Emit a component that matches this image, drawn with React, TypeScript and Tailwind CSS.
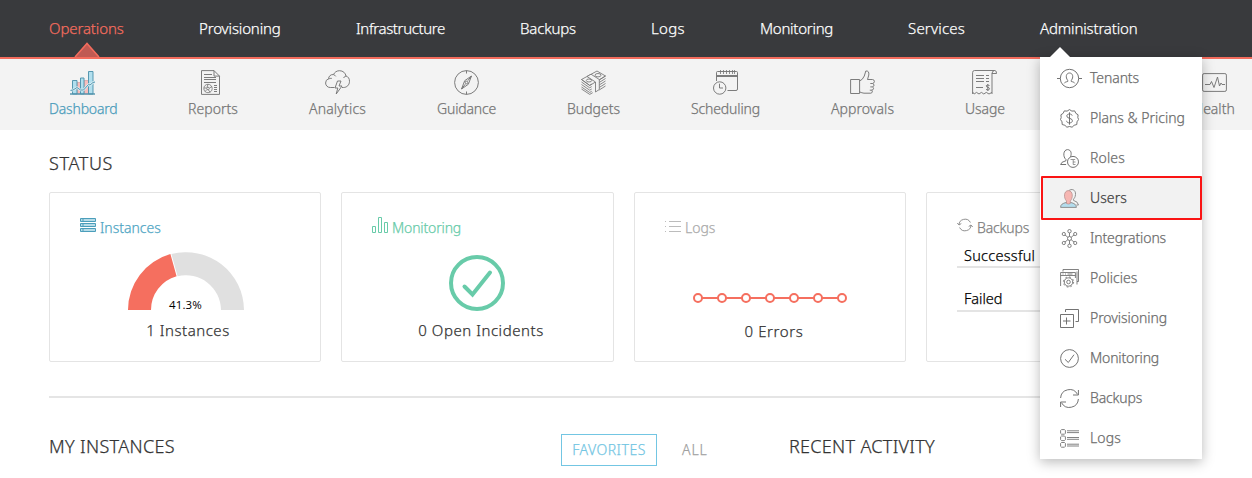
import type { ReactNode } from "react";

function Svg({ s, vb, children, className = "" }: { s: number; vb?: string; children: ReactNode; className?: string }) {
  return (
    <svg width={s} height={s} viewBox={vb ?? `0 0 ${s} ${s}`} fill="none" stroke="currentColor" strokeWidth="0.95" strokeLinejoin="round" className={`shrink-0 ${className}`}>
      {children}
    </svg>
  );
}

const NAV: { label: string; cls: string }[] = [
  { label: "Operations", cls: "w-[75px] tracking-[-0.12px] text-[#f46c5d]" },
  { label: "Provisioning", cls: "w-[82px] tracking-[-0.13px]" },
  { label: "Infrastructure", cls: "w-[89px] tracking-[-0.35px]" },
  { label: "Backups", cls: "w-[56px] tracking-[-0.15px]" },
  { label: "Logs", cls: "w-[34px] tracking-[0.3px]" },
  { label: "Monitoring", cls: "w-[73px] tracking-[-0.26px]" },
  { label: "Services", cls: "w-[57px] tracking-[0.2px]" },
  { label: "Administration", cls: "w-[98px] tracking-[-0.15px]" },
];

const SUB: { label: string; cls: string; icon: ReactNode }[] = [
  {
    label: "Dashboard",
    cls: "w-[68px] tracking-[-0.18px] text-[#4a9cbb]",
    icon: (
      <Svg s={25} className="mr-px">
        <g stroke="#4f93ad">
          <path d="M7 12.500h3.500V24H7zM14 10.500h4.500V24H14z" fill="#f8bdbb" stroke="#d79fa3" strokeWidth="0.7" />
          <path d="M2.500 10.500H7V24H2.500zM10.500 8H14v16h-3.500zM18.500 1.500H23V24h-4.500z" fill="#b2dfee" />
          <path d="M0 24h25" strokeWidth="1.400" />
          <path d="M.5 20.500 3 20l4-2.500L10.500 20h3l5-5.500 1.500.500 3-2.500 2-.5" stroke="#d8edf4" strokeWidth="2.400" />
          <path d="M.5 20.500 3 20l4-2.500L10.500 20h3l5-5.500 1.500.500 3-2.500 2-.5" />
        </g>
      </Svg>
    ),
  },
  {
    label: "Reports",
    cls: "w-[50px] tracking-[0.05px]",
    icon: (
      <Svg s={25} vb="4 0 25 25">
        <path d="M4.500.6H17l5.500 5.500v18.300h-18zM17 .6v5.500h5.500" />
        <path d="M7 4.500h8M7 7.500h12M7 9.500h12M7 12.500h12M17 15.500h3M17 17.500h3M17 19.500h3M17 21.500h3" />
        <g strokeWidth="0.8">
          <circle cx="11" cy="18.500" r="4.200" />
          <circle cx="11" cy="18.500" r="1.300" />
          <path d="m11 14.300-1 3M7 18h2.600M12.500 18l2.500-1.500M11.500 20l1.500 2.300M10 19.500l-2 2" />
        </g>
      </Svg>
    ),
  },
  {
    label: "Analytics",
    cls: "w-[57px] tracking-[0.17px]",
    icon: (
      <Svg s={25}>
        <path d="M9.500 17.500H5.300A4.500 4.500 0 0 1 .6 13a4.300 4.300 0 0 1 3-4.200A4.200 4.200 0 0 1 8.500 4.600C9.500 2.200 11.800.7 14.500.7c3.500 0 6 2.300 6.500 5.300 2.200.7 3.500 2.500 3.500 5.300 0 3.700-2.700 6.200-6 6.200H17" />
        <path d="M3.600 9.200c.9-.8 2-1 3.200-.8M8.500 4.600c1 .3 1.800.9 2.300 1.800M21 6c-1.200.3-2 1-2.400 2" />
        <path d="m12.500 11-2.500 7h2.800L11.200 24l5.800-8h-3l2-5z" />
      </Svg>
    ),
  },
  {
    label: "Guidance",
    cls: "w-[59px] tracking-[-0.17px]",
    icon: (
      <Svg s={25}>
        <circle cx="12.500" cy="12.500" r="11.900" />
        <path d="M12.500.5v3M12.500 21.500v3M17.500 6l-3.200 8.300L7.500 19l3.200-8.300zM7.500 19l3.800-4.800M17.500 6l-3.700 4.700" />
        <circle cx="12.500" cy="12.500" r="1.300" />
      </Svg>
    ),
  },
  {
    label: "Budgets",
    cls: "w-[53px]",
    icon: (
      <Svg s={25}>
        <g strokeWidth="0.85">
          <path d="M.5 9.500 16 1l8.500 5-15.800 9.500z" />
          <path d="m.5 9.500 8.200 5.800 2-1.200M.5 12l8.200 5.800 2-1.200M.5 14.500l8.200 5.700 2-1.200M.5 17l8.200 5.500 2-1.200M.5 19l8.200 5.400 3-1.700M24.500 6l-6.300 4M24.500 8.500l-6.300 4M24.500 11l-6.300 4M24.500 13.500l-6.300 4M24.500 16l-6.300 4" />
          <path d="M6 6.500 14.500 12v10l3.800-2.500V9.500L10 4.200z" fill="#f3f3f3" />
          <ellipse cx="8" cy="10.500" rx="2.700" ry="1.500" />
          <ellipse cx="17" cy="5.200" rx="3" ry="1.700" />
        </g>
      </Svg>
    ),
  },
  {
    label: "Scheduling",
    cls: "w-[69px] tracking-[-0.14px]",
    icon: (
      <Svg s={25}>
        <path d="M3.500 11V2.500q0-1 1-1h19q1 0 1 1V19q0 1.500-1.500 1.500h-8.500M3.500 6.500h21M4 5.500h20" />
        <path d="M7.500 0v4M10.500 0v4M13.500 0v4M16.500 0v4M19.500 0v4M21.500 0v4" strokeWidth="0.8" />
        <circle cx="6.700" cy="18" r="6.200" />
        <path d="M6.500 13.700V18H10" />
      </Svg>
    ),
  },
  {
    label: "Approvals",
    cls: "w-[63px] tracking-[0.07px]",
    icon: (
      <Svg s={25}>
        <path d="M.6 9.500h9v14h-9zM9.600 11l2.700-1.800 2-3.200 1.500-5q3.500-.5 3 4L17.500 9.500h5q2 .3 1.900 2t-1.900 2h-2.200M22.500 13.500q1.500.4 1.500 1.700t-1.700 1.700h-2M22.500 17q1.200.4 1 1.700t-1.700 1.500h-2M21.500 20.200q1 .4.800 1.600t-1.500 1.400H14q-2-.2-4.400-1.300" />
      </Svg>
    ),
  },
  {
    label: "Usage",
    cls: "w-[40px] tracking-[-0.06px]",
    icon: (
      <Svg s={25} className="mr-px">
        <path d="M.6 24V2.500q0-2 2-2h20.200q2 .3 1.700 3H20V24M20 4q-.2-3 2.500-3.500" />
        <path d="m.6 22 1.600 2 2.300-1.600L7 24l2.400-1.600 2.400 1.600 2.500-1.600L17 24l3-1.600M4 5.500h8M4 8.500h8M4 11.500h8M14 5.500h3M14 8.500h3M14 11.500h3M4 17.500h7" />
        <path d="M17.500 15.500q-3-1.300-3.300.3c-.2 1.800 3.500 1.200 3.300 3-.3 1.700-2 1.200-3.500.6M15.800 14v7" />
      </Svg>
    ),
  },
];

const MENU: { label: string; cls: string; icon: ReactNode }[] = [
  {
    label: "Tenants",
    cls: "tracking-[-0.1px]",
    icon: (
      <Svg s={25} className="-mx-[3px]">
        <circle cx="12.500" cy="12.500" r="9.200" />
        <path d="M0 12.500h3.300M21.700 12.500H25M7.300 17.300c.5-1.200 1.700-1.400 3.400-1.800v-1.200C8.300 11.500 9 7 12.500 7s4.200 4.500 1.800 7.300v1.200c1.700.4 2.900.6 3.400 1.800" />
      </Svg>
    ),
  },
  {
    label: "Plans & Pricing",
    cls: "",
    icon: (
      <Svg s={19}>
        <path d="m9.500.6 2.400 1.500 2.800-.2 1.100 2.400 2.300 1.500-.3 2.700.8 2-1.600 2.300-.2 2.700-2.700.8-2 1.900-2.600-.7-2.600.7-2-1.900-2.700-.8-.2-2.700L.5 10.500l.7-2L.9 5.800l2.300-1.500 1.100-2.400 2.800.2z" />
        <path d="M12.200 6.600C11.800 5.400 10.800 5 9.500 5 8 5 6.800 5.700 6.800 7c0 3 5.600 1.700 5.600 4.700 0 1.400-1.300 2.200-2.900 2.200-1.500 0-2.800-.7-3-2.100M9.500 3.300v12.400" />
      </Svg>
    ),
  },
  {
    label: "Roles",
    cls: "tracking-[0.15px]",
    icon: (
      <Svg s={19}>
        <path d="M6 10.500v1.200Q.8 13 .6 15.500h5.500M6 10.500C2.800 8 3 .8 7.500.6c4 .2 4.200 4.300 3 7.200" />
        <circle cx="13" cy="12.900" r="5.500" />
        <path d="M10.500 10.500h2.700v5h2.300M13.200 13h2.300M13.200 10.500h2" strokeWidth="0.7" />
      </Svg>
    ),
  },
  {
    label: "Users",
    cls: "tracking-[0.1px]",
    icon: (
      <Svg s={19}>
        <path d="M8.500 2C11.500-1 16 .8 15.500 5.500c-.2 3-1.500 4-2 4.700v1.200q4.500 1.200 5 4.600h-2" />
        <path d="M.6 18.400c0-3 2-4 5.600-4.900h4.600c3.600.9 5.400 1.900 5.600 4.900z" fill="#b4dded" />
        <path d="M6.500 14.500V12C3.500 9 3.600 1.700 8.400 1.600c4.700.1 4.900 7.400 1.900 10.400v2.500q-1.900 1-3.800 0z" fill="#f6b6b2" stroke="#b08a88" strokeWidth="0.7" />
      </Svg>
    ),
  },
  {
    label: "Integrations",
    cls: "tracking-[-0.12px]",
    icon: (
      <Svg s={19}>
        <g strokeWidth="0.85">
          <circle cx="9.500" cy="9.500" r="2" />
          <circle cx="9.500" cy="2.200" r="1.700" />
          <circle cx="9.500" cy="16.800" r="1.700" />
          <circle cx="3.800" cy="5" r="1.600" />
          <circle cx="15.200" cy="5" r="1.600" />
          <circle cx="3.800" cy="14" r="1.600" />
          <circle cx="15.200" cy="14" r="1.600" />
          <path d="M9.500 3.900v3.600M9.500 11.500v3.600M5 6l2.900 2.300M14 6l-2.900 2.300M5 13l2.900-2.300M14 13l-2.900-2.300" />
        </g>
      </Svg>
    ),
  },
  {
    label: "Policies",
    cls: "",
    icon: (
      <Svg s={19}>
        <g strokeWidth="0.85">
          <path d="M3 2.500v-2h15.500v12H17M.6 17V3.500h14.800V9M.6 6.500h14.800M2.500 5h1M5 5h1M7.500 5h5M17 15.500v-13" />
          <circle cx="8.500" cy="13" r="1.800" />
          <circle cx="8.500" cy="13" r="4.200" />
          <circle cx="8.500" cy="13" r="5.100" strokeDasharray="1.800 2.200" />
        </g>
      </Svg>
    ),
  },
  {
    label: "Provisioning",
    cls: "tracking-[-0.06px]",
    icon: (
      <Svg s={19}>
        <path d="M.5 5.500h13v13H.5zM5.500 3V.5h13v12h-3M6.500 8.500v7M3 12h7.500" />
      </Svg>
    ),
  },
  {
    label: "Monitoring",
    cls: "tracking-[-0.15px]",
    icon: (
      <Svg s={19}>
        <circle cx="9.500" cy="9.500" r="8.900" />
        <path d="m5 10.300 3.300 3.200L14 5.700" />
      </Svg>
    ),
  },
  {
    label: "Backups",
    cls: "tracking-[-0.17px]",
    icon: (
      <Svg s={19}>
        <path d="M.6 9A9 9 0 0 1 17.500 5.300M18.400 10A9 9 0 0 1 1.500 13.700M18.400 1v5H13M.6 18v-5H6" />
      </Svg>
    ),
  },
  {
    label: "Logs",
    cls: "tracking-[0.14px]",
    icon: (
      <Svg s={19}>
        <path
          strokeWidth="0.85"
          d="M1.500.6h3l.9.9v2.800l-.9.900h-3l-.9-.9V1.500zM1.500 7h3l.9.900v2.800l-.9.900h-3l-.9-.9V7.900zM1.500 13.500h3l.9.900v2.900l-.9.900h-3l-.9-.9v-2.900zM7 1.800h12M7 3.600h12M7 8.500h12M7 10.300h12M7 15.200h12M7 17h12"
        />
      </Svg>
    ),
  },
];

function Card({ icon, title, cls, wide = false, children }: { icon: ReactNode; title: string; cls: string; wide?: boolean; children: ReactNode }) {
  return (
    <section className={`flex h-[170px] shrink-0 flex-col rounded-[2px] border border-[#e4e4e4] bg-white ${wide ? "w-[273px]" : "w-[272px]"}`}>
      <h3 className={`mt-[25px] ml-[30px] flex h-[19px] items-center text-[14px] leading-5 ${cls}`}>
        {icon}
        {title}
      </h3>
      {children}
    </section>
  );
}

function Menu() {
  return (
    <div className="absolute top-[57px] left-[1040px] z-10 w-[162px] bg-white pt-px pb-px shadow-[0_3px_12px_rgba(0,0,0,0.28)]">
      <svg className="absolute -top-[10px] left-[10px]" width="20" height="10">
        <path d="M0 10 10 0l10 10z" fill="#fff" />
      </svg>
      {MENU.map((m) =>
        m.label === "Users" ? (
          <a key={m.label} className="relative flex h-10 items-center gap-[11px] pl-5 text-[14px] text-[#3e3e3e]">
            <span className="absolute -top-[2px] left-px h-[44px] w-[161px] rounded-[1px] border-2 border-[#fa1414] bg-[#f2f2f2]" />
            <span className="relative text-[#8a8a8a]">{m.icon}</span>
            <span className={`relative pb-px whitespace-nowrap ${m.cls}`}>{m.label}</span>
          </a>
        ) : (
          <a key={m.label} className="flex h-10 items-center gap-[11px] pl-5 text-[14px] text-[#6c6c6c]">
            {m.icon}
            <span className={`pb-px whitespace-nowrap ${m.cls}`}>{m.label}</span>
          </a>
        ),
      )}
    </div>
  );
}

export default function App() {
  const points = [0, 1, 2, 3, 4, 5, 6];
  return (
    <div className="relative h-[478px] w-[1252px] overflow-hidden bg-white font-['Noto_Sans','Open_Sans',sans-serif] font-light text-[#333] [-webkit-text-stroke:0.25px]">
      <nav className="flex h-[59px] gap-[75px] border-b-2 border-[#f46c5d] bg-[#393a3d] pl-[49px] text-[15px] leading-[57px] text-white">
        {NAV.map((n) => (
          <a key={n.label} className={`relative shrink-0 whitespace-nowrap ${n.cls}`}>
            {n.label}
            {n.label === "Operations" && (
              <svg className="absolute bottom-0 left-[25px]" width="26" height="15">
                <path d="M1 15 13 1.500 25 15" fill="#c05a53" stroke="#f46c5d" strokeWidth="1.500" />
              </svg>
            )}
          </a>
        ))}
      </nav>
      <nav className="flex h-[71px] gap-[71px] bg-[#f3f3f3] pt-[11px] pl-[49px] text-[14px] leading-5 text-[#757575]">
        {SUB.map((s) => (
          <a key={s.label} className="flex shrink-0 flex-col items-center gap-1">
            {s.icon}
            <span className={`whitespace-nowrap ${s.cls}`}>{s.label}</span>
          </a>
        ))}
        <a className="ml-[117px] flex shrink-0 flex-col items-center gap-1">
          <Svg s={25}>
            <rect x=".6" y="3.600" width="23.800" height="17.800" rx="1.500" />
            <path d="M3 14.500h5l1.500-3 2.500 6L15.500 7l2 9 1.500-3 1 1.500h3" />
          </Svg>
          <span className="w-[42px] whitespace-nowrap">Health</span>
        </a>
      </nav>
      <main className="pl-[49px]">
        <h2 className="pt-[21px] text-[18px] leading-6 tracking-[0.63px]">STATUS</h2>
        <div className="mt-[17px] flex gap-5">
          <Card
            title="Instances"
            cls="gap-[4px] text-[#4fa6c4]"
            icon={
              <svg width="16" height="15" viewBox="0 0 16 15" fill="#b7dce8" stroke="#4b9ebb" className="mb-[4px]">
                <path d="M.5.500h15v3H.5zM.5 5.500h15v3H.5zM.5 10.500h15v3H.5zM2 2h2M2 7h2M2 12h2" />
              </svg>
            }
          >
            <div className="relative mt-[15px] flex h-[58px] justify-center pl-[2px]">
              <svg width="118" height="59" viewBox="0 0 118 59">
                <path d="M1 59A58 58 0 0 1 43.400 3.100L49.600 25.300A35 35 0 0 0 24 59z" fill="#f56f5f" transform="translate(0 -1)" />
                <path d="M44.400 2.100A58 58 0 0 1 117 58H94A35 35 0 0 0 50.600 24.300z" fill="#e0e0e0" />
              </svg>
              <span className="absolute right-0 bottom-[-3px] left-px text-center font-['Open_Sans'] text-[11.500px] leading-4 font-normal tracking-[0.15px] text-black [-webkit-text-stroke:0]">41.3%</span>
            </div>
            <p className="mt-[10px] pl-[6px] text-center text-[15px] leading-5 tracking-[0.53px]">1 Instances</p>
          </Card>
          <Card
            wide
            title="Monitoring"
            cls="gap-[4px] tracking-[-0.15px] text-[#68cba9]"
            icon={
              <svg width="16" height="16" fill="none" stroke="currentColor" className="mb-[6px]">
                <path d="M.5 9.500h3v6h-3zM6.500.500h3v15h-3zM12.500 5.500h3v10h-3z" />
              </svg>
            }
          >
            <svg width="56" height="56" fill="none" stroke="#68cba9" strokeWidth="4" strokeLinecap="round" className="mt-[18px] ml-[107px]">
              <circle cx="28" cy="28" r="26" />
              <path d="m15.500 31.500 8 8L41 17.500" />
            </svg>
            <p className="mt-[9px] pl-[7px] text-center text-[15px] leading-5 tracking-[0.55px]">0 Open Incidents</p>
          </Card>
          <Card
            title="Logs"
            cls="gap-[4px] text-[#ababab]"
            icon={
              <svg width="16" height="13" stroke="#bcbcbc" className="mb-[2px]">
                <path d="M0 1.500h1M4 1.500h12M0 6.500h1M4 6.500h12M0 11.500h1M4 11.500h12" />
              </svg>
            }
          >
            <svg width="156" height="12" className="mt-[55px] ml-[57px]" stroke="#f56f5f" strokeWidth="2">
              <path d="M6 6h144" />
              {points.map((p) => (
                <circle key={p} cx={6 + p * 24} cy="6" r="4" fill="#fff" />
              ))}
            </svg>
            <p className="mt-[17px] pl-[8px] text-center text-[15px] leading-5 tracking-[0.6px]">0 Errors</p>
          </Card>
          <Card
            title="Backups"
            cls="gap-[4px] tracking-[-0.17px] text-[#7d7d7d]"
            icon={
              <svg width="16" height="14" fill="none" stroke="#8f8f8f" className="mb-[6px]">
                <path d="M2 7A6 5.800 0 0 1 13.400 4.500M14 7A6 5.800 0 0 1 2.600 9.500M.3 5 2 7l2.300-1.500M11.700 8.500 14 7l1.700 2" />
              </svg>
            }
          >
            <p className="mt-[8px] ml-[30px] h-[23px] border-b-2 border-[#e4e4e4] pl-[7px] text-[14.500px] leading-5 tracking-[0.28px] text-black">Successful</p>
            <p className="mt-[20px] ml-[30px] h-[24px] border-b-2 border-[#e4e4e4] pl-[7px] text-[14.500px] leading-[21px] text-black">Failed</p>
          </Card>
        </div>
        <hr className="mt-[34px] w-[1149px] border-t-2 border-[#e5e5e5]" />
        <div className="mt-[36px] flex h-8">
          <h2 className="w-[512px] text-[18px] leading-6 tracking-[0.34px]">MY INSTANCES</h2>
          <button className="h-8 w-[96px] border border-[#73c6e3] pb-[2px] text-[14px] tracking-[0.5px] text-[#73c6e3]">FAVORITES</button>
          <button className="ml-[25px] h-8 w-[107px] pb-[2px] text-left text-[14px] tracking-[0.9px] text-[#a0a0a0]">ALL</button>
          <h2 className="text-[18px] leading-6 tracking-[0.3px]">RECENT ACTIVITY</h2>
        </div>
      </main>
      <Menu />
    </div>
  );
}
